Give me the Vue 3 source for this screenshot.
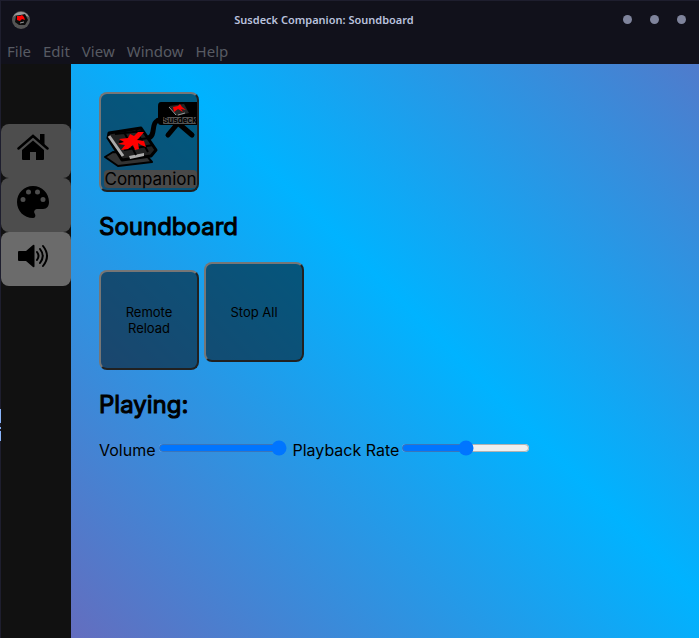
<script setup>
import { ref } from 'vue'

const menus = ['File', 'Edit', 'View', 'Window', 'Help']
const volume = ref(100)
const rate = ref(50)
</script>

<template>
  <div class="window">
    <header class="titlebar">
      <svg class="app-icon" viewBox="0 0 18 18" aria-hidden="true">
        <circle cx="9" cy="9" r="9" fill="#555" />
        <path d="M1 6 A9 9 0 0 1 17 6 L12 4 L4 4 Z" fill="#999" />
        <path d="M4 5 L13 3 L16 9 L13 14 L7 14 L3 11 Z" fill="#0c0c0c" />
        <path d="M5 5 L8 5 L10 4 L12 6 L13 9 L10 8 L8 10 L5 9 Z" fill="#f00" />
        <path d="M8 12 L12 11" stroke="#999" />
      </svg>
      <h1 class="title">Susdeck Companion: Soundboard</h1>
      <div class="controls">
        <button class="dot" aria-label="Minimize"></button>
        <button class="dot" aria-label="Maximize"></button>
        <button class="dot" aria-label="Close"></button>
      </div>
    </header>
    <nav class="menubar">
      <button v-for="m in menus" :key="m" class="menu">{{ m }}</button>
    </nav>
    <div class="body">
      <nav class="sidebar">
        <a class="tab" href="#home" aria-label="Home">
          <svg viewBox="0 -1 32 32" aria-hidden="true">
            <path d="M16 7.500 L27 17 V26 Q27 27 26 27 H19 V19 H13 V27 H6 Q5 27 5 26 V17 Z" />
            <path d="M1.500 15.500 L16 3 L30.500 15.500" fill="none" stroke="#000" stroke-width="2.500" stroke-linecap="round" />
            <path d="M23 1 H27.500 V12 L23 8 Z" />
          </svg>
        </a>
        <a class="tab" href="#theme" aria-label="Theme">
          <svg viewBox="0 0 32 32" aria-hidden="true">
            <path fill-rule="evenodd" d="M16 0 C7 0 0 7 0 16 S7 32 16 32 C18 32 19 30 18 28 C16 25 18 23 21 23 H26 C30 23 32 20 32 16 C32 7 25 0 16 0 Z M6 11 a2.500 2.500 0 1 1 0 5 a2.500 2.500 0 1 1 0 -5 M11.500 3.500 a2.500 2.500 0 1 1 0 5 a2.500 2.500 0 1 1 0 -5 M20.500 3.500 a2.500 2.500 0 1 1 0 5 a2.500 2.500 0 1 1 0 -5 M26 11 a2.500 2.500 0 1 1 0 5 a2.500 2.500 0 1 1 0 -5" />
          </svg>
        </a>
        <a class="tab active" href="#soundboard" aria-label="Soundboard">
          <svg viewBox="0 0 32 32" aria-hidden="true">
            <path d="M2 11 H9 L16 5 Q17.500 4 17.500 6 V26 Q17.500 28 16 27 L9 21 H2 Q1 21 1 20 V12 Q1 11 2 11 Z" />
            <path d="M20 12 Q23 16 20 20 M23 9 Q28.500 16 23 23 M26 6 Q34 16 26 26" fill="none" stroke="#000" stroke-width="2" stroke-linecap="round" />
          </svg>
        </a>
      </nav>
      <main class="content">
        <button class="tile logo" aria-label="Susdeck Companion">
          <svg class="art" viewBox="0 0 96 76" aria-hidden="true">
            <path d="M4 63 L17 72 L51 68 L45 61 L12 58 Z" fill="#333" stroke="#000" stroke-width="2" stroke-linejoin="round" />
            <path d="M8 39 L40 34 L55 56 L50 62 L21 66 L7 44 Z" fill="#222" stroke="#000" stroke-width="3" stroke-linejoin="round" />
            <path d="M8 42 L22 62" stroke="#aaa" stroke-width="3" />
            <path d="M28 62 L43 59 V62 L29 65 Z" fill="#aaa" />
            <path d="M14 40 L42 37 M18 48 L48 44 M23 56 L52 51 M23 38 L35 61 M35 36 L47 58" stroke="#000" stroke-width="2" />
            <path d="M17 50 L23 48 L18 45 L27 44 L29 40 L33 42 L37 38 L43 38 L39 43 L36 46 L43 47 L45 53 L40 51 L37 49 L38 55 L34 56 L32 51 L27 55 L20 56 L24 51 Z" fill="#f00" />
            <path d="M47 44 C55 43 50 29 56 27 C58 25 60 28 63 26" fill="none" stroke="#000" stroke-width="5" />
            <path d="M60 8 H96 V31 H60 Q57 31 57 28 V12 Q57 8 60 8 Z" />
            <path d="M77 29 L67 41 M77 29 L91 41" stroke="#000" stroke-width="5" stroke-linecap="round" />
            <path d="M68 12 L83 10 L88 19 L76 22 Z" fill="#262626" />
            <path d="M68 13 L75 21 M77 21 L84 19" stroke="#999" stroke-width="1" />
            <path d="M72 13 L77 12 L79 10 L81 13 L85 16 L80 15 L82 18 L77 15 L73 18 Z" fill="#f00" />
            <rect x="62" y="23" width="33" height="7" rx="1" fill="#555" />
            <text x="62" y="29" class="mini">Susdeck</text>
          </svg>
          <span class="caption">Companion</span>
        </button>
        <h2>Soundboard</h2>
        <div class="tiles">
          <button class="tile">Remote Reload</button>
          <button class="tile">Stop All</button>
        </div>
        <h2>Playing:</h2>
        <div class="sliders">
          <div class="slider">
            <label for="volume">Volume</label>
            <input id="volume" v-model="volume" type="range" min="0" max="100" />
          </div>
          <div class="slider">
            <label for="rate">Playback Rate</label>
            <input id="rate" v-model="rate" type="range" min="0" max="100" />
          </div>
        </div>
      </main>
    </div>
  </div>
</template>

<style>
body {
  margin: 0;
  background: #11111b;
}
</style>

<style scoped>
.window {
  position: relative;
  box-sizing: border-box;
  min-height: 100vh;
  display: flex;
  flex-direction: column;
  border-top: 1px solid #1e1e2e;
  border-left: 1px solid #1e1e2e;
  background: #11111b;
  font-family: Inter, sans-serif;
  color: #000;
}
/* accent marks on the window's left edge */
.window::before {
  content: "";
  position: absolute;
  left: -1px;
  top: 408px;
  width: 1px;
  height: 32px;
  background: linear-gradient(#89b4fa 14px, #1e1e2e 14px 18px, #89b4fa 18px 20px, #1e1e2e 20px 22px, #89b4fa 22px);
}
button {
  font-family: inherit;
  color: inherit;
}
.titlebar {
  display: grid;
  grid-template-columns: 1fr auto 1fr;
  align-items: center;
  height: 37px;
  padding: 0 13px 0 11px;
}
.app-icon {
  width: 18px;
  height: 18px;
}
.title {
  margin: 0;
  padding-right: 50px;
  font: 600 11px "Noto Sans", sans-serif;
  color: #bac2de;
}
.controls {
  display: flex;
  justify-content: flex-end;
  gap: 18px;
}
.dot {
  width: 9px;
  height: 9px;
  padding: 0;
  border: 0;
  border-radius: 50%;
  background: #7f849c;
}
.menubar {
  display: flex;
  gap: 12px;
  height: 26px;
  padding: 0 6px;
}
.menu {
  padding: 0;
  border: 0;
  background: none;
  font: 15px "Noto Sans", sans-serif;
  color: #585b63;
}
.body {
  flex: 1;
  display: flex;
  background: linear-gradient(45deg, #6e66b8 0%, #00b3ff 58%, #6e66b8 116%);
}
.sidebar {
  flex: none;
  width: 70px;
  padding-top: 60px;
  background: #111;
}
.tab {
  box-sizing: border-box;
  display: flex;
  justify-content: center;
  height: 54px;
  padding: 8px 6px 0 0;
  border-radius: 8px;
  background: #4d4d4d;
}
.tab.active {
  background: #6b6b6b;
}
.tab svg {
  width: 32px;
  height: 32px;
}
.content {
  flex: 1;
  padding: 28px;
}
.tile {
  box-sizing: border-box;
  width: 100px;
  height: 100px;
  padding: 0 16px;
  border: 2px outset #767676;
  border-radius: 8px;
  background: rgba(0, 0, 0, 0.5);
  font-size: 13px;
  line-height: 16px;
}
.logo {
  display: flex;
  flex-direction: column;
  padding: 0;
  overflow: hidden;
}
.art {
  width: 96px;
  height: 76px;
}
.mini {
  font: bold 8px Inter, sans-serif;
}
.caption {
  align-self: stretch;
  margin-left: 3px;
  border-radius: 4px;
  background: #4a4a4a;
  font-size: 17px;
  line-height: 18px;
}
h2 {
  margin: 20px 0;
  font-size: 24px;
  line-height: 30px;
  font-weight: 400;
  -webkit-text-stroke: 1px #000;
}
.tiles {
  display: flex;
  align-items: flex-start;
  gap: 5px;
}
.tiles .tile:first-child {
  margin-top: 8px;
}
.sliders {
  display: flex;
  flex-wrap: wrap;
  gap: 6px;
  font-size: 16px;
}
.slider {
  display: flex;
  align-items: baseline;
  gap: 2px;
}
.slider input {
  width: 129px;
  margin: 0;
}
</style>
